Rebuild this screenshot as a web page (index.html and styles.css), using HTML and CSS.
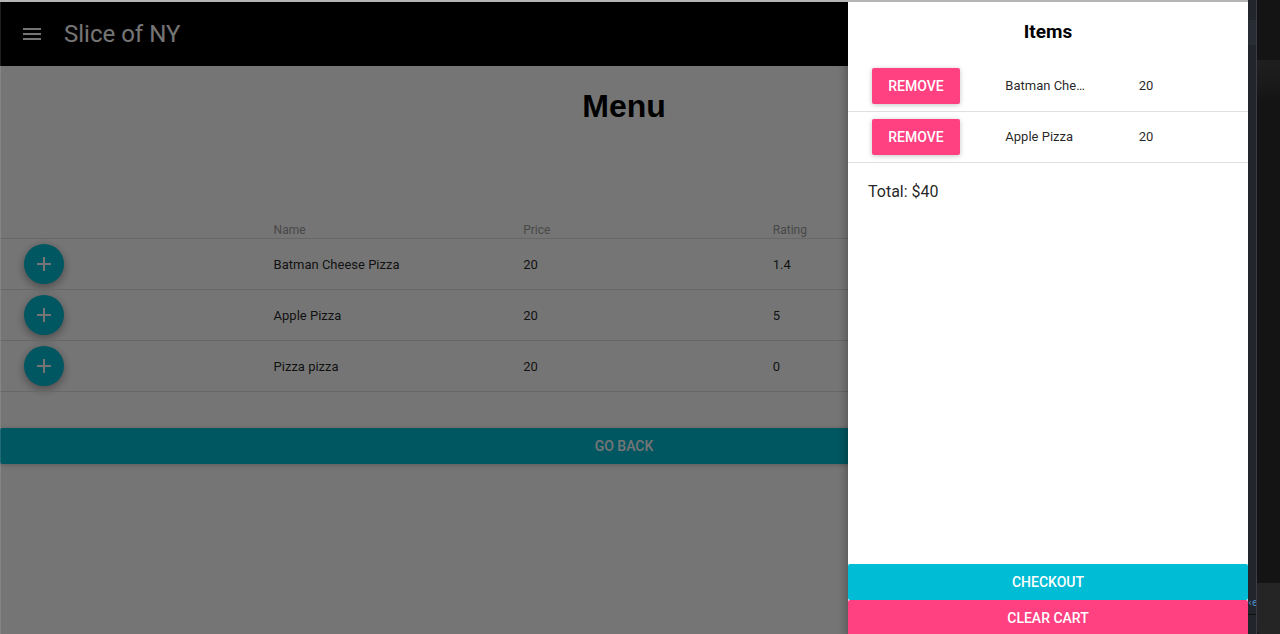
FILE: index.html
```html
<!DOCTYPE html>
<html lang="en">
<head>
<meta charset="utf-8">
<title>Slice of NY</title>
<link rel="stylesheet" href="styles.css">
</head>
<body>
<div class="screen">
  <div class="window">
    <header class="appbar">
      <button class="icon-btn" aria-label="menu">
        <svg viewBox="0 0 24 24" width="24" height="24"><path fill="#fff" d="M3 18h18v-2H3v2zm0-5h18v-2H3v2zm0-7v2h18V6H3z"/></svg>
      </button>
      <h2 class="app-title">Slice of NY</h2>
    </header>
    <main class="content">
      <h1 class="page-title">Menu</h1>
      <table class="menu-table">
        <thead>
          <tr><th></th><th>Name</th><th>Price</th><th>Rating</th><th></th></tr>
        </thead>
        <tbody>
          <tr>
            <td><span class="fab"><svg viewBox="0 0 24 24" width="24" height="24"><path fill="#fff" d="M19 13h-6v6h-2v-6H5v-2h6V5h2v6h6v2z"/></svg></span></td>
            <td>Batman Cheese Pizza</td><td>20</td><td>1.4</td><td></td>
          </tr>
          <tr>
            <td><span class="fab"><svg viewBox="0 0 24 24" width="24" height="24"><path fill="#fff" d="M19 13h-6v6h-2v-6H5v-2h6V5h2v6h6v2z"/></svg></span></td>
            <td>Apple Pizza</td><td>20</td><td>5</td><td></td>
          </tr>
          <tr>
            <td><span class="fab"><svg viewBox="0 0 24 24" width="24" height="24"><path fill="#fff" d="M19 13h-6v6h-2v-6H5v-2h6V5h2v6h6v2z"/></svg></span></td>
            <td>Pizza pizza</td><td>20</td><td>0</td><td></td>
          </tr>
        </tbody>
      </table>
      <button class="go-back">GO BACK</button>
    </main>
    <div class="overlay"></div>
    <aside class="drawer">
      <h3 class="drawer-title">Items</h3>
      <table class="cart-table">
        <tbody>
          <tr>
            <td><button class="remove">REMOVE</button></td>
            <td><span class="ellipsis">Batman Cheese Pizza</span></td>
            <td>20</td>
          </tr>
          <tr>
            <td><button class="remove">REMOVE</button></td>
            <td><span class="ellipsis">Apple Pizza</span></td>
            <td>20</td>
          </tr>
        </tbody>
      </table>
      <p class="total">Total: $40</p>
      <div class="drawer-actions">
        <button class="checkout">CHECKOUT</button>
        <button class="clear">CLEAR CART</button>
      </div>
    </aside>
  </div>
  <div class="desk">
    <div class="dock">
      <div class="dock-top"></div>
      <div class="dock-fill"></div>
      <span class="dock-text">‹e</span>
      <div class="dock-bottom"></div>
    </div>
    <div class="desk-bg">
      <div class="desk-shape"></div>
      <div class="desk-fill"></div>
      <div class="desk-panel"></div>
    </div>
  </div>
</div>
</body>
</html>
```

FILE: styles.css
```css
* { box-sizing: border-box; }
html, body { margin: 0; padding: 0; }
body {
  background: #141414;
  font-family: Roboto, "Liberation Sans", sans-serif;
  overflow: hidden;
}
.screen {
  display: flex;
  width: 1280px;
  height: 634px;
}
.window {
  position: relative;
  width: 1248px;
  height: 634px;
  border-top: 2px solid #b5b5b5;
  background: #fff;
  overflow: hidden;
}
.window::after {
  content: "";
  position: absolute;
  left: 0; top: 0; bottom: 0;
  width: 1px;
  background: rgba(255,255,255,0.12);
  z-index: 5;
}
.appbar {
  display: flex;
  align-items: center;
  height: 64px;
  background: #000;
  padding-left: 8px;
}
.icon-btn {
  width: 48px; height: 48px;
  padding: 12px;
  border: 0;
  background: transparent;
  display: flex;
}
.app-title {
  margin: 0 0 0 8px;
  color: #fff;
  font-size: 24px;
  font-weight: 400;
  line-height: 64px;
}
.content { display: flex; flex-direction: column; }
.page-title {
  font-family: "Liberation Sans", Arial, sans-serif;
  font-size: 32px;
  font-weight: 700;
  text-align: center;
  margin: 22px 0 21px;
  line-height: 37px;
}
.menu-table {
  margin-top: 76px;
  width: 1248px;
  border-collapse: collapse;
  table-layout: fixed;
}
.menu-table th {
  text-align: left;
  font-size: 12px;
  font-weight: 400;
  color: #9e9e9e;
  line-height: 15px;
  padding: 1px 24px 0;
  border-bottom: 1px solid #e0e0e0;
}
.menu-table td {
  height: 51px;
  padding: 0 24px;
  font-size: 13px;
  color: rgba(0,0,0,0.87);
  border-bottom: 1px solid #e0e0e0;
  vertical-align: middle;
}
.fab {
  display: flex;
  align-items: center;
  justify-content: center;
  width: 40px; height: 40px;
  border-radius: 50%;
  background: #00bcd4;
  box-shadow: 0 3px 10px rgba(0,0,0,0.16), 0 3px 10px rgba(0,0,0,0.23);
}
.go-back {
  margin-top: 36px;
  height: 36px;
  width: 100%;
  border: 0;
  border-radius: 2px;
  background: #00bcd4;
  color: #fff;
  font-family: Roboto, sans-serif;
  font-size: 14px;
  font-weight: 500;
  box-shadow: 0 1px 6px rgba(0,0,0,0.12), 0 1px 4px rgba(0,0,0,0.12);
}
.overlay {
  position: absolute;
  inset: 0;
  background: rgba(0,0,0,0.54);
  z-index: 2;
}
.drawer {
  position: absolute;
  top: 0; right: 0;
  width: 400px;
  height: calc(100% + 2px);
  background: #fff;
  z-index: 3;
  display: flex;
  flex-direction: column;
  box-shadow: 0 3px 10px rgba(0,0,0,0.16), 0 3px 10px rgba(0,0,0,0.23);
}
.drawer-title {
  margin: 0;
  height: 59px;
  line-height: 60px;
  text-align: center;
  font-size: 19px;
  font-weight: 700;
  color: #000;
}
.cart-table {
  width: 100%;
  border-collapse: collapse;
  table-layout: fixed;
}
.cart-table td {
  height: 50px;
  padding: 0 24px;
  font-size: 13px;
  color: rgba(0,0,0,0.87);
  border-bottom: 1px solid #e0e0e0;
  vertical-align: middle;
}
.cart-table tr + tr td { height: 51px; }
.ellipsis {
  display: block;
  white-space: nowrap;
  overflow: hidden;
  text-overflow: ellipsis;
}
.remove {
  width: 88px;
  height: 36px;
  border: 0;
  border-radius: 2px;
  background: #ff4081;
  color: #fff;
  font-family: Roboto, sans-serif;
  font-size: 14px;
  font-weight: 500;
  box-shadow: 0 1px 6px rgba(0,0,0,0.12), 0 1px 4px rgba(0,0,0,0.12);
}
.total {
  margin: 0;
  padding: 19px 20px 18px;
  font-size: 16px;
  line-height: 20px;
  color: rgba(0,0,0,0.87);
}
.drawer-actions {
  margin-top: auto;
  display: flex;
  flex-direction: column;
}
.checkout, .clear {
  height: 36px;
  width: 100%;
  border: 0;
  border-radius: 2px;
  color: #fff;
  font-family: Roboto, sans-serif;
  font-size: 14px;
  font-weight: 500;
}
.checkout { background: #00bcd4; }
.clear { background: #ff4081; }
.desk {
  display: flex;
  width: 32px;
  height: 634px;
}
.dock {
  width: 9px;
  display: flex;
  flex-direction: column;
  background: #22252b;
  border-right: 1px solid #3a3d44;
  overflow: hidden;
}
.dock-top { height: 20px; }
.dock-fill { flex: 1; border-top: 25px solid #282c34; }
.dock-text {
  font-family: "DejaVu Sans", sans-serif;
  font-size: 10px;
  line-height: 14px;
  color: #4d8fd1;
  margin: 0 0 4px 0;
  white-space: nowrap;
}
.dock-bottom { height: 20px; border-top: 1px solid #111; }
.desk-bg {
  flex: 1;
  display: flex;
  flex-direction: column;
  background: #141414;
}
.desk-shape {
  height: 40px;
  margin-top: 60px;
  background: linear-gradient(170deg, #1f1f1f 0%, #1a1a1a 60%, #141414 100%);
}
.desk-fill { flex: 1; }
.desk-panel {
  height: 51px;
  background: #252525;
  border-radius: 0 0 0 4px;
}
```
